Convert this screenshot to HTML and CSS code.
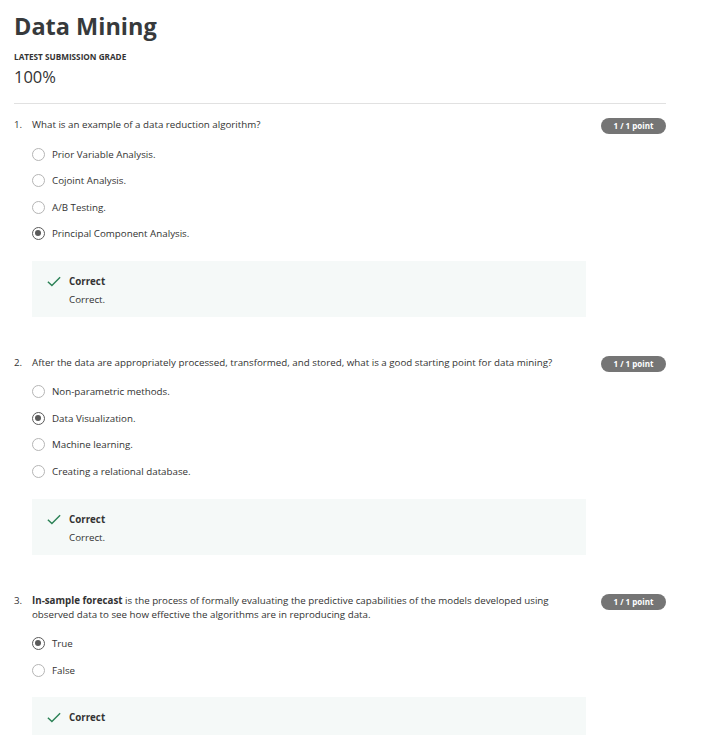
FILE: index.html
```html
<!DOCTYPE html>
<html lang="en">
<head>
<meta charset="utf-8">
<title>Data Mining</title>
<link rel="stylesheet" href="styles.css">
</head>
<body>
<main class="page">
  <h1 class="title">Data Mining</h1>
  <div class="grade-label">LATEST SUBMISSION GRADE</div>
  <div class="grade">100%</div>
  <hr class="rule">

  <section class="question">
    <div class="q-main">
      <div class="q-num">1.</div>
      <div class="q-body">
        <div class="q-text">What is an example of a data reduction algorithm?</div>
        <ul class="options">
          <li class="option"><span class="radio"></span>Prior Variable Analysis.</li>
          <li class="option"><span class="radio"></span>Cojoint Analysis.</li>
          <li class="option"><span class="radio"></span>A/B Testing.</li>
          <li class="option"><span class="radio checked"></span>Principal Component Analysis.</li>
        </ul>
        <div class="feedback">
          <svg class="check" viewBox="0 0 16 12" width="14" height="11"><path d="M1 6.2 L5.6 10.6 L15 1.2" fill="none" stroke="#2a8155" stroke-width="1.6"/></svg>
          <div class="fb-text">
            <div class="fb-title">Correct</div>
            <div class="fb-desc">Correct.</div>
          </div>
        </div>
      </div>
    </div>
    <div class="badge">1 / 1 point</div>
  </section>

  <section class="question">
    <div class="q-main">
      <div class="q-num">2.</div>
      <div class="q-body">
        <div class="q-text">After the data are appropriately processed, transformed, and stored, what is a good starting point for data mining?</div>
        <ul class="options">
          <li class="option"><span class="radio"></span>Non-parametric methods.</li>
          <li class="option"><span class="radio checked"></span>Data Visualization.</li>
          <li class="option"><span class="radio"></span>Machine learning.</li>
          <li class="option"><span class="radio"></span>Creating a relational database.</li>
        </ul>
        <div class="feedback">
          <svg class="check" viewBox="0 0 16 12" width="14" height="11"><path d="M1 6.2 L5.6 10.6 L15 1.2" fill="none" stroke="#2a8155" stroke-width="1.6"/></svg>
          <div class="fb-text">
            <div class="fb-title">Correct</div>
            <div class="fb-desc">Correct.</div>
          </div>
        </div>
      </div>
    </div>
    <div class="badge">1 / 1 point</div>
  </section>

  <section class="question">
    <div class="q-main">
      <div class="q-num">3.</div>
      <div class="q-body">
        <div class="q-text"><strong>In-sample forecast</strong> is the process of formally evaluating the predictive capabilities of the models developed using observed data to see how effective the algorithms are in reproducing data.</div>
        <ul class="options">
          <li class="option"><span class="radio checked"></span>True</li>
          <li class="option"><span class="radio"></span>False</li>
        </ul>
        <div class="feedback">
          <svg class="check" viewBox="0 0 16 12" width="14" height="11"><path d="M1 6.2 L5.6 10.6 L15 1.2" fill="none" stroke="#2a8155" stroke-width="1.6"/></svg>
          <div class="fb-text">
            <div class="fb-title">Correct</div>
          </div>
        </div>
      </div>
    </div>
    <div class="badge">1 / 1 point</div>
  </section>
</main>
</body>
</html>
```

FILE: styles.css
```css
html, body {
  margin: 0;
  padding: 0;
  background: #ffffff;
}

body {
  font-family: "Open Sans", "Liberation Sans", sans-serif;
  color: #333333;
}

.page {
  width: 652px;
  padding: 7px 0 0 14px;
}

.title {
  margin: 0;
  font-size: 23.5px;
  line-height: 38px;
  font-weight: 700;
  color: #373a3c;
}

.grade-label {
  margin-top: 7px;
  font-size: 8.2px;
  line-height: 10px;
  font-weight: 700;
  color: #333;
}

.grade {
  margin-top: 4px;
  font-size: 16.5px;
  line-height: 22px;
  color: #333;
}

.rule {
  margin: 15px 0 0 0;
  border: 0;
  border-top: 1px solid #e1e1e1;
  height: 0;
}

.question {
  display: flex;
  justify-content: space-between;
  align-items: flex-start;
  padding-top: 14px;
  padding-bottom: 25px;
}

.q-main {
  display: flex;
  width: 572px;
}

.q-num {
  width: 18px;
  font-size: 9.75px;
  line-height: 14px;
  flex-shrink: 0;
}

.q-body {
  width: 554px;
}

.q-text {
  font-size: 9.75px;
  line-height: 14px;
  padding-right: 10px;
}

.q-text strong {
  font-weight: 700;
}

.options {
  list-style: none;
  margin: 8.75px 0 0 0;
  padding: 0;
}

.option {
  display: flex;
  align-items: center;
  height: 26.5px;
  font-size: 9.75px;
}

.radio {
  box-sizing: border-box;
  width: 13px;
  height: 13px;
  border-radius: 50%;
  border: 1px solid #b5b5b5;
  background: #fff;
  margin-right: 7px;
  position: relative;
  flex-shrink: 0;
}

.radio.checked {
  border: 1.5px solid #5a5a5a;
}

.radio.checked::after {
  content: "";
  position: absolute;
  left: 2px;
  top: 2px;
  width: 6px;
  height: 6px;
  border-radius: 50%;
  background: #5a5a5a;
}

.feedback {
  margin-top: 14px;
  background: #f5f9f8;
  display: flex;
  align-items: flex-start;
  padding: 12px 15px 8px 15px;
}

.check {
  margin-top: 3px;
  margin-right: 8px;
  flex-shrink: 0;
}

.fb-text {
  font-size: 9.75px;
  line-height: 18px;
}

.fb-title {
  font-weight: 700;
}

.badge {
  width: 65px;
  height: 16px;
  border-radius: 8px;
  background: #757575;
  color: #fff;
  font-size: 8px;
  font-weight: 700;
  line-height: 16px;
  text-align: center;
}
```
